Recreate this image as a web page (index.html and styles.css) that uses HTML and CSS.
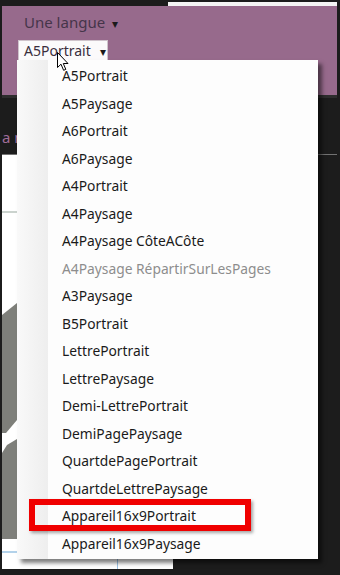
FILE: index.html
```html
<!DOCTYPE html>
<html lang="fr">
<head>
    <meta charset="UTF-8">
    <title>Format de page</title>
    <link rel="stylesheet" href="styles.css">
</head>
<body>
    <div class="screen">
        <div class="topline"><div class="glare"></div></div>

        <header class="ribbon">
            <div class="lang">Une langue <span class="caret">&#9662;</span></div>
            <div class="picker">A5Portrait <span class="caret">&#9662;</span></div>
        </header>

        <div class="toolbar">
            <div class="hint-clip"><span class="hint">a m</span></div>
        </div>

        <div class="workspace">
            <div class="page">
                <svg width="171" height="414" viewBox="0 0 171 414">
                    <rect x="0" y="56" width="171" height="2" fill="#cbd3ce"/>
                    <polygon points="0,160 15,148 15,265 4,278 0,278" fill="#7e7f7a"/>
                    <polygon points="5,290 15,284 15,384 0,384 0,298" fill="#7e7f7a"/>
                    <rect x="0" y="396" width="20" height="2" fill="#b3d2ea"/>
                    <rect x="115" y="372" width="1" height="42" fill="#9cc3e5"/>
                </svg>
            </div>
        </div>

        <!-- liste deroulante ouverte -->
        <ul class="menu">
            <li>A5Portrait</li>
            <li>A5Paysage</li>
            <li>A6Portrait</li>
            <li>A6Paysage</li>
            <li>A4Portrait</li>
            <li>A4Paysage</li>
            <li>A4Paysage CôteACôte</li>
            <li class="disabled">A4Paysage RépartirSurLesPages</li>
            <li>A3Paysage</li>
            <li>B5Portrait</li>
            <li>LettrePortrait</li>
            <li>LettrePaysage</li>
            <li>Demi-LettrePortrait</li>
            <li>DemiPagePaysage</li>
            <li>QuartdePagePortrait</li>
            <li>QuartdeLettrePaysage</li>
            <li class="marked"><span class="mark"></span>Appareil16x9Portrait</li>
            <li>Appareil16x9Paysage</li>
        </ul>

        <svg class="cursor" width="14" height="20" viewBox="0 0 14 20">
            <path d="M0.5 0.5 L0.5 15.5 L4 12.2 L6.6 18.3 L8.8 17.4 L6.3 11.5 L11 11.5 Z" fill="#fff" stroke="#000" stroke-width="1" stroke-linejoin="miter"/>
        </svg>
    </div>
</body>
</html>
```

FILE: styles.css
```css
body {
    margin: 0;
    background-color: #1c1c1c;
    font-family: "Noto Sans", "Open Sans", sans-serif;
    overflow: hidden;
}

.screen {
    position: relative;
    width: 340px;
    height: 575px;
    padding: 0 3px 0 2px;
    box-sizing: border-box;
    overflow: hidden;
}

.topline {
    height: 6px;
    padding-top: 2px;
    box-sizing: border-box;
}

.glare {
    height: 4px;
    margin-left: 166px;
    background-color: #f4f4f4;
}

.ribbon {
    height: 89px;
    background-color: #976a8c;
    padding: 6px 0 0 22px;
    box-sizing: border-box;
}

.lang {
    font-size: 15px;
    line-height: 20px;
    color: #45354a;
}

.caret {
    font-size: 12px;
    color: #1a1a1a;
    margin-left: 3px;
}

.picker {
    width: 90px;
    height: 21px;
    margin: 6px 0 0 -6px;
    padding-left: 5px;
    box-sizing: border-box;
    background-color: #fbfafb;
    border: 1px solid #cfc4cc;
    font-size: 14px;
    line-height: 19px;
    color: #3a2e3d;
}

.picker .caret {
    margin-left: 6px;
}

.toolbar {
    height: 60px;
    border-top: 3px solid #2d2d2d;
    border-bottom: 1px solid #727272;
    box-sizing: border-box;
    padding: 28px 0 0 0;
}

.hint-clip {
    width: 15px;
    overflow: hidden;
    white-space: nowrap;
}

.hint {
    font-size: 15px;
    line-height: 20px;
    color: #a06d99;
}

.workspace {
    display: flex;
    height: 414px;
}

.page {
    width: 171px;
    background-color: #ffffff;
}

.page svg {
    display: block;
}

.menu {
    position: absolute;
    left: 17px;
    top: 60px;
    width: 301px;
    height: 499px;
    margin: 0;
    padding: 2px 0;
    box-sizing: border-box;
    list-style: none;
    background: linear-gradient(to right, #f9f9f9 0, #eeeeee 31px, #fdfdfd 31px);
    box-shadow: 4px 4px 4px rgba(0, 0, 0, 0.5);
}

.menu li {
    position: relative;
    height: 27.5px;
    line-height: 27.5px;
    padding-left: 45px;
    font-size: 13.8px;
    color: #1a1a1a;
    white-space: nowrap;
}

.menu li.disabled {
    color: #8d8d8d;
}

.mark {
    position: absolute;
    left: 12px;
    top: -3px;
    width: 222px;
    height: 32px;
    box-sizing: border-box;
    border: 6px solid #f00000;
    box-shadow: 2px 2px 3px rgba(0, 0, 0, 0.35);
}

.cursor {
    position: absolute;
    left: 57px;
    top: 52px;
}
```
